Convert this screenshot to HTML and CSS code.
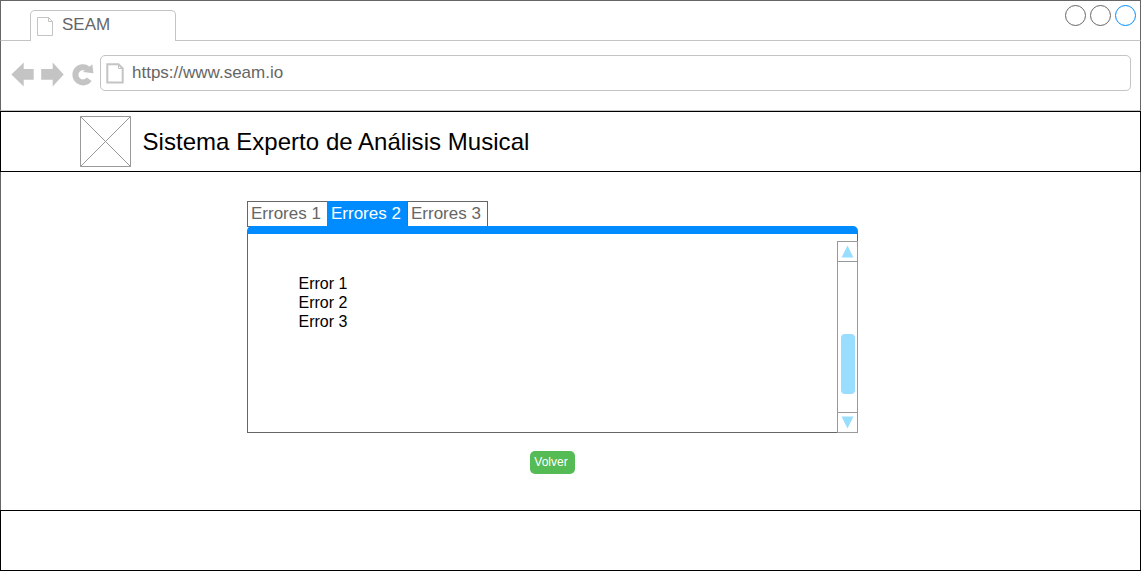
FILE: index.html
```html
<!DOCTYPE html>
<html lang="es">
<head>
<meta charset="utf-8">
<title>SEAM</title>
<link rel="stylesheet" href="styles.css">
</head>
<body>
<div class="window">
  <div class="tabstrip">
    <div class="browser-tab">
      <svg class="tab-icon" width="16" height="19" viewBox="0 0 16 19"><path d="M.5.5H11.500L15.500 4.500V18.500H.5ZM11.500 .5V4.500H15.500"/></svg>
      <span>SEAM</span>
    </div>
    <div class="controls">
      <span class="control"></span>
      <span class="control"></span>
      <span class="control active"></span>
    </div>
  </div>
  <div class="toolbar">
    <svg class="nav" width="84" height="26" viewBox="0 0 84 26">
      <path class="solid" d="M.4 12.400 12.700 .4V6.900H22.700V17.700H12.700V24.400Z"/>
      <path class="solid" d="M52.700 12.400 41.700 .4V6.900H30.200V17.700H41.700V24.400Z"/>
      <path class="reload" d="M76.700 6.800A7.600 7.600 0 1 0 78.200 17.200"/>
      <path class="solid" d="M81.300 2.200 82.500 11.300 72 10Z"/>
    </svg>
    <div class="address">
      <svg class="page-icon" width="18" height="21" viewBox="0 0 18 21"><path d="M1.300 1.300H12.500L16.700 5.500V19.500H1.300Z"/><path class="fold" d="M12.500 1V5.500H17"/></svg>
      <span>https://www.seam.io</span>
    </div>
  </div>
  <header class="header">
    <svg class="logo" width="51" height="51" viewBox="0 0 51 51"><path d="M.5.5H50.500V50.500H.5ZM.5.5 50.500 50.500M50.500.5.5 50.500"/></svg>
    <h1 class="title">Sistema Experto de Análisis Musical</h1>
  </header>
  <main class="main">
    <div class="tabs">
      <div class="tab">Errores 1</div>
      <div class="tab selected">Errores 2</div>
      <div class="tab">Errores 3</div>
    </div>
    <section class="panel">
      <div class="bar"></div>
      <div class="panel-body">
        <ul class="errors">
          <li>Error 1</li>
          <li>Error 2</li>
          <li>Error 3</li>
        </ul>
        <div class="scrollbar">
          <svg class="arrow" width="19" height="19" viewBox="0 0 19 19"><path d="M9.500 3.600 15.500 15.600H3.500Z"/></svg>
          <div class="track"><div class="thumb"></div></div>
          <svg class="arrow" width="19" height="19" viewBox="0 0 19 19"><path d="M3.500 3.500H15.500L9.500 15.500Z"/></svg>
        </div>
      </div>
    </section>
    <button class="back">Volver</button>
  </main>
  <footer class="footer"></footer>
</div>
</body>
</html>
```
FILE: styles.css
```css
* { box-sizing: border-box; }
body {
  margin: 0;
  background: #fff;
  font-family: "Liberation Sans", Arial, sans-serif;
}
svg { display: block; flex: none; fill: none; }
.window {
  display: flex;
  flex-direction: column;
  width: 1141px;
  height: 571px;
}
.tabstrip, .toolbar, .main {
  border: solid #666;
  border-width: 0 1px;
}
.tabstrip {
  display: flex;
  justify-content: space-between;
  height: 41px;
  padding-left: 29px;
  border-top-width: 1px;
  border-bottom: 1px solid #c4c4c4;
}
.browser-tab {
  display: flex;
  width: 146px;
  height: 31px;
  margin-top: 9px;
  padding: 6px 0 0 6px;
  gap: 9px;
  border: 1px solid #c4c4c4;
  border-bottom: 0;
  border-radius: 5px 5px 0 0;
  background: #fff;
  color: #666;
  font-size: 17px;
  line-height: 19px;
}
.browser-tab span { margin-top: -2px; }
.tab-icon { stroke: #c4c4c4; }
.controls { display: flex; gap: 4px; padding: 4px 4px 0 0; }
.control {
  width: 21px;
  height: 21px;
  border: 1px solid #666;
  border-radius: 50%;
}
.control.active { border-color: #008cff; }
.toolbar {
  display: flex;
  height: 70px;
  padding: 14px 9px 0 10px;
  gap: 5px;
  border-bottom: 1px solid #c4c4c4;
}
.nav { margin-top: 7px; }
.solid { fill: #c4c4c4; }
.reload { stroke: #c4c4c4; stroke-width: 6; }
.address {
  display: flex;
  flex: 1;
  height: 36px;
  padding: 7px 0 0 5px;
  gap: 8px;
  border: 1px solid #c4c4c4;
  border-radius: 5px;
  color: #666;
  font-size: 17px;
  line-height: 19px;
}
.page-icon { stroke: #c4c4c4; stroke-width: 2; }
.fold { stroke-width: 1; }
.header {
  display: flex;
  height: 61px;
  padding: 4px 0 0 79px;
  gap: 11.5px;
  border: 1px solid #000;
}
.logo { stroke: #999; }
.title {
  margin: 0;
  font-size: 24px;
  font-weight: 400;
  line-height: 51px;
  letter-spacing: .04px;
}
.main { height: 338px; padding: 29px 0 0 246px; }
.tabs { display: flex; height: 25px; }
.tab {
  width: 80px;
  height: 26px;
  padding-left: 3px;
  border: 1px solid #666;
  border-right-width: 0;
  color: #666;
  font-size: 17px;
  line-height: 23px;
}
.tab:last-child { width: 81px; border-right-width: 1px; }
.tab.selected { border-color: #008cff; background: #008cff; color: #fff; }
.panel { position: relative; width: 611px; height: 207px; }
.bar { height: 8px; border-radius: 5px 5px 0 0; background: #008cff; }
.panel-body {
  display: flex;
  justify-content: space-between;
  height: 199px;
  border: 1px solid #666;
  border-top: 0;
}
.errors {
  margin: 0;
  padding: 40px 0 0 50.500px;
  list-style: none;
  font-size: 16px;
  line-height: 19px;
}
.scrollbar {
  width: 21px;
  height: 192px;
  margin: 7px -1px 0 0;
  border: 1px solid #999;
}
.arrow { fill: #9df; }
.track {
  display: flex;
  justify-content: center;
  height: 152px;
  padding-top: 72px;
  border: solid #999;
  border-width: 1px 0;
}
.thumb { width: 14px; height: 60px; border-radius: 4px; background: #9df; }
.back {
  display: block;
  width: 45px;
  height: 23px;
  margin: 18px 0 0 283px;
  padding: 0 0 0 4.300px;
  border: 0;
  border-radius: 5px;
  background: #5b5;
  color: #fff;
  font: 12px/23px "Liberation Sans", Arial, sans-serif;
  text-align: left;
}
.footer { height: 61px; border: 1px solid #000; }
```
